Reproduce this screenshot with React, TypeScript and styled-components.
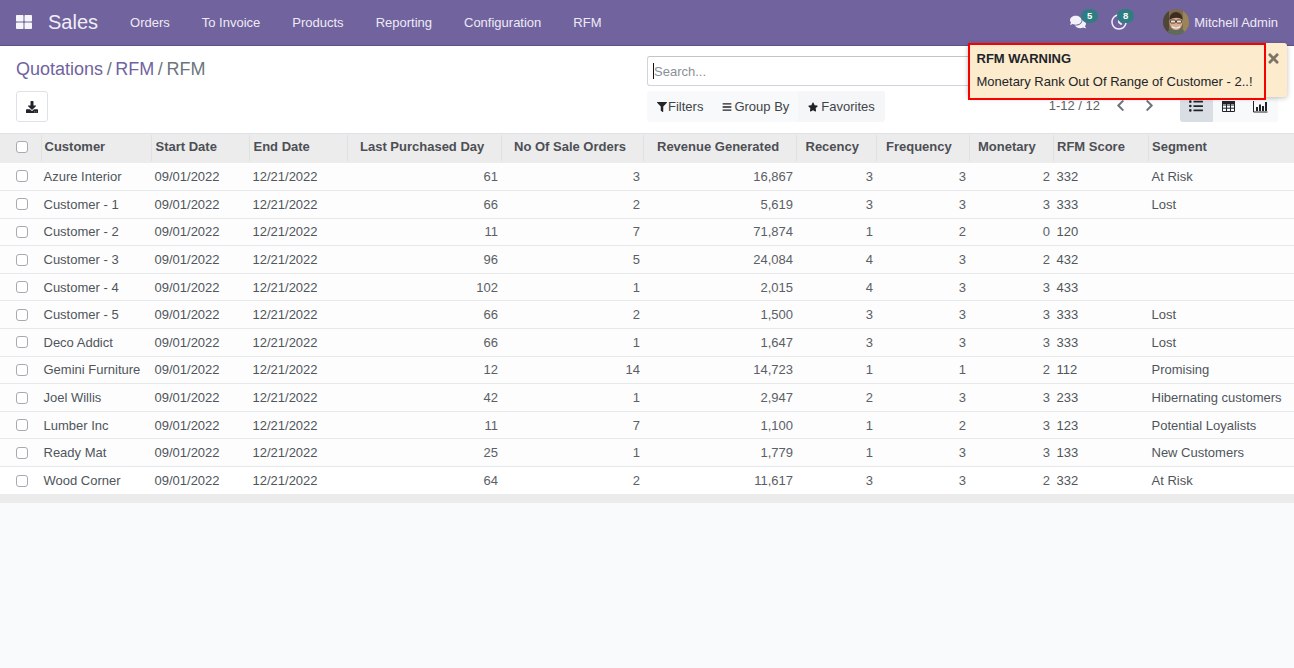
import { createGlobalStyle } from 'styled-components';
import styled from 'styled-components';
import {
  FaBars,
  FaChevronLeft,
  FaChevronRight,
  FaComments,
  FaDownload,
  FaFilter,
  FaListUl,
  FaRegClock,
  FaStar,
  FaThLarge,
  FaTimes,
} from 'react-icons/fa';

const GlobalStyle = createGlobalStyle`
  html, body { margin: 0; height: 100%; }
  body {
    font-family: "Liberation Sans", Arial, sans-serif;
    font-size: 13px;
    color: #4c4c4c;
    background: #f9fafb;
  }
  #root { height: 100%; }
  * { box-sizing: border-box; }
`;

const Page = styled.div`
  position: relative;
  height: 668px;
  overflow: hidden;
  display: flex;
  flex-direction: column;
`;

const Navbar = styled.header`
  height: 46px;
  flex: none;
  display: flex;
  align-items: center;
  background: #71639e;
  border-bottom: 1px solid #5d5283;
  color: #fff;
  padding: 0 16px 1px;
`;

const AppsIcon = styled.span`
  display: flex;
  font-size: 16px;
  width: 16px;
  margin-right: 16px;
  color: #f5f5f8;
`;

const Brand = styled.span`
  font-size: 20px;
  line-height: 24px;
  color: #f0eef5;
  margin-right: 16px;
`;

const Menu = styled.nav`
  display: flex;
  flex: 1;
`;

const MenuItem = styled.a`
  padding: 0 16px;
  color: #eeeaf5;
  font-size: 13px;
`;

const Systray = styled.div`
  display: flex;
  align-items: center;
  color: #f3f1f8;
`;

const TrayIcon = styled.span<{ $gap: number }>`
  position: relative;
  display: flex;
  font-size: 16px;
  margin-right: ${(p) => p.$gap}px;
`;

const Badge = styled.span<{ $left: number }>`
  position: absolute;
  top: -5px;
  left: ${(p) => p.$left}px;
  width: 17px;
  height: 14px;
  border-radius: 7px;
  background: #2f7d82;
  color: #fff;
  font-size: 9.5px;
  font-weight: 700;
  line-height: 13px;
  text-align: center;
`;

const Avatar = styled.svg`
  width: 26px;
  height: 26px;
  border-radius: 50%;
  margin-right: 5px;
`;

const UserName = styled.span`
  font-size: 13px;
  color: #eeeaf5;
`;

const ControlPanel = styled.section`
  height: 87px;
  flex: none;
  display: grid;
  grid-template-columns: 647px 1fr;
  background: #fff;
  padding-right: 16px;
`;

const PanelLeft = styled.div`
  display: flex;
  flex-direction: column;
  align-items: flex-start;
  padding: 12px 0 0 16px;
`;

const Breadcrumb = styled.div`
  font-size: 18px;
  line-height: 22px;
  display: flex;
  gap: 3.6px;
  color: #6c757d;
`;

const Crumb = styled.a`
  color: #71639e;
`;

const DownloadButton = styled.button`
  margin-top: 11px;
  width: 32px;
  height: 31px;
  display: flex;
  align-items: center;
  justify-content: center;
  padding: 0;
  font-size: 12px;
  color: #212529;
  background: #fff;
  border: 1px solid #dee2e6;
  border-radius: 3px;
`;

const PanelRight = styled.div`
  display: flex;
  flex-direction: column;
  padding-top: 10px;
`;

const SearchBox = styled.div`
  height: 30px;
  display: flex;
  align-items: center;
  padding-left: 5px;
  border: 1px solid #ced4da;
  border-top-color: #c4c4c4;
  border-radius: 3px;
  color: #8a9097;
  font-size: 13px;
  background: #fff;
`;

const Caret = styled.span`
  width: 1px;
  height: 16px;
  background: #111;
`;

const PanelRow = styled.div`
  margin-top: 5px;
  display: flex;
  align-items: flex-start;
`;

const FilterGroup = styled.div`
  width: 238px;
  height: 31px;
  display: flex;
  background: #f8f9fa;
  border-radius: 3px;
  overflow: hidden;
`;

const FilterButton = styled.span<{ $pad: string; $gap: number; $dark?: boolean }>`
  display: flex;
  flex: ${(p) => (p.$dark ? 1 : 'none')};
  align-items: center;
  gap: ${(p) => p.$gap}px;
  padding: ${(p) => p.$pad};
  color: #3f4449;
  font-size: 13px;
  background: ${(p) => (p.$dark ? '#f5f6f7' : 'transparent')};
  svg { font-size: 10px; color: #212529; }
`;

const Pager = styled.div`
  margin-left: auto;
  display: flex;
  align-items: center;
  height: 28px;
  color: #5a6168;
  font-size: 13px;
`;

const PagerArrow = styled.span<{ $left: number }>`
  display: flex;
  margin-left: ${(p) => p.$left}px;
  font-size: 13px;
  color: #6c757d;
`;

const ViewSwitch = styled.div`
  margin-left: 24px;
  width: 98px;
  height: 31px;
  display: flex;
  background: #f8f9fa;
  border-radius: 3px;
  overflow: hidden;
`;

const ViewButton = styled.span<{ $active?: boolean }>`
  flex: 1;
  display: flex;
  align-items: center;
  justify-content: center;
  padding-bottom: 1px;
  font-size: 14px;
  color: #212529;
  background: ${(p) => (p.$active ? '#d9dee4' : 'transparent')};
`;

const ViewGlyph = styled.svg`
  width: 15px;
  height: 13px;
  margin-right: 2px;
`;

const ListTable = styled.table`
  width: 1294px;
  flex: none;
  table-layout: fixed;
  border-collapse: collapse;
  background: #fff;
  border-top: 1px solid #dee2e6;
`;

const Col = styled.col<{ $w: number }>`
  width: ${(p) => p.$w}px;
`;

const HeadRow = styled.tr`
  height: 29.4px;
  background: #ececec;
`;

const Th = styled.th<{ $pad: number }>`
  padding: 0 0 3px ${(p) => p.$pad}px;
  font-size: 13px;
  font-weight: 700;
  color: #4c4f54;
  white-space: nowrap;
  overflow: hidden;
  text-align: left;
  position: relative;
  &:not(:first-child)::before {
    content: '';
    position: absolute;
    left: 0;
    top: 1px;
    bottom: 2px;
    width: 1px;
    background: #dfe1e2;
  }
`;

const Row = styled.tr`
  height: 27.62px;
  border-bottom: 1px solid #e6e8ea;
  background: #fdfdfd;
  &:last-child { border-bottom: none; background: #fff; }
`;

const Td = styled.td<{ $right?: boolean; $num?: boolean; $name?: boolean }>`
  padding: 0 3px 0 ${(p) => (p.$name ? 2.5 : 3.5)}px;
  font-size: 13px;
  color: ${(p) => (p.$num ? '#5a6066' : '#4f555b')};
  white-space: nowrap;
  overflow: hidden;
  text-align: ${(p) => (p.$right ? 'right' : 'left')};
`;

const CheckTd = styled.td`
  padding: 0;
`;

const CheckCell = styled.span`
  display: block;
  width: 12px;
  height: 12px;
  margin-left: 16px;
  background: #fff;
  border: 1px solid #a5abb1;
  border-radius: 3px;
`;

const FootBar = styled.div`
  height: 9px;
  flex: none;
  background: #ebebeb;
`;

const Toast = styled.aside`
  position: absolute;
  top: 43px;
  left: 968px;
  width: 319px;
  height: 54px;
  background: #fcebcd;
  border-radius: 3px;
  box-shadow: 0 1px 5px rgba(0, 0, 0, 0.25);
  color: #212529;
`;

const ToastBody = styled.div`
  width: 298px;
  height: 57px;
  padding: 6px 6.5px;
  background: #fcebcd;
  border: 2.5px solid #f60000;
`;

const ToastTitle = styled.div`
  font-weight: 700;
  font-size: 13px;
  line-height: 15px;
  margin-bottom: 8px;
`;

const ToastText = styled.div`
  font-size: 13px;
  line-height: 15px;
  white-space: nowrap;
`;

const ToastClose = styled.span`
  position: absolute;
  top: 8px;
  right: 6px;
  display: flex;
  font-size: 15px;
  color: #7c7567;
`;

const menuItems = ['Orders', 'To Invoice', 'Products', 'Reporting', 'Configuration', 'RFM'];

const columns: { title: string; width: number; pad: number }[] = [
  { title: 'Customer', width: 110, pad: 3.5 },
  { title: 'Start Date', width: 98, pad: 4.5 },
  { title: 'End Date', width: 98, pad: 4.5 },
  { title: 'Last Purchased Day', width: 154, pad: 13 },
  { title: 'No Of Sale Orders', width: 142, pad: 13 },
  { title: 'Revenue Generated', width: 153, pad: 14 },
  { title: 'Recency', width: 80, pad: 9.5 },
  { title: 'Frequency', width: 93, pad: 10 },
  { title: 'Monetary', width: 84, pad: 9 },
  { title: 'RFM Score', width: 95, pad: 4 },
  { title: 'Segment', width: 146, pad: 4 },
];

const rows = [
  ['Azure Interior', '61', '3', '16,867', '3', '3', '2', '332', 'At Risk'],
  ['Customer - 1', '66', '2', '5,619', '3', '3', '3', '333', 'Lost'],
  ['Customer - 2', '11', '7', '71,874', '1', '2', '0', '120', ''],
  ['Customer - 3', '96', '5', '24,084', '4', '3', '2', '432', ''],
  ['Customer - 4', '102', '1', '2,015', '4', '3', '3', '433', ''],
  ['Customer - 5', '66', '2', '1,500', '3', '3', '3', '333', 'Lost'],
  ['Deco Addict', '66', '1', '1,647', '3', '3', '3', '333', 'Lost'],
  ['Gemini Furniture', '12', '14', '14,723', '1', '1', '2', '112', 'Promising'],
  ['Joel Willis', '42', '1', '2,947', '2', '3', '3', '233', 'Hibernating customers'],
  ['Lumber Inc', '11', '7', '1,100', '1', '2', '3', '123', 'Potential Loyalists'],
  ['Ready Mat', '25', '1', '1,779', '1', '3', '3', '133', 'New Customers'],
  ['Wood Corner', '64', '2', '11,617', '3', '3', '2', '332', 'At Risk'],
];

export default function App() {
  return (
    <Page>
      <GlobalStyle />
      <Navbar>
        <AppsIcon>
          <FaThLarge />
        </AppsIcon>
        <Brand>Sales</Brand>
        <Menu>
          {menuItems.map((item) => (
            <MenuItem key={item}>{item}</MenuItem>
          ))}
        </Menu>
        <Systray>
          <TrayIcon $gap={25}>
            <FaComments />
            <Badge $left={11}>5</Badge>
          </TrayIcon>
          <TrayIcon $gap={36}>
            <FaRegClock />
            <Badge $left={6}>8</Badge>
          </TrayIcon>
          <Avatar viewBox="0 0 26 26">
            <rect width="26" height="26" fill="#7d6a4c" />
            <rect x="0" y="0" width="6" height="26" fill="#4f4638" />
            <rect x="20" y="0" width="6" height="26" fill="#9a8458" />
            <path d="M3 26c1-5 5-7 10-7s9 2 10 7z" fill="#5d6a5c" />
            <ellipse cx="13" cy="13" rx="6.5" ry="8" fill="#d9ab90" />
            <path d="M6.5 11c-.5-5 3-8 6.5-8s7 3 6.5 8c-3-3-9-3-13 0z" fill="#3d2c22" />
            <rect x="7.5" y="11" width="5" height="3" rx="1" fill="#efe0d2" stroke="#2b2320" strokeWidth="0.8" />
            <rect x="13.5" y="11" width="5" height="3" rx="1" fill="#efe0d2" stroke="#2b2320" strokeWidth="0.8" />
            <path d="M9 17.5c2 2 6 2 8 0" stroke="#f4ece6" strokeWidth="1.2" fill="none" />
          </Avatar>
          <UserName>Mitchell Admin</UserName>
        </Systray>
      </Navbar>

      <ControlPanel>
        <PanelLeft>
          <Breadcrumb>
            <Crumb>Quotations</Crumb>
            <span>/</span>
            <Crumb>RFM</Crumb>
            <span>/</span>
            <span>RFM</span>
          </Breadcrumb>
          <DownloadButton aria-label="Download">
            <FaDownload />
          </DownloadButton>
        </PanelLeft>
        <PanelRight>
          <SearchBox>
            <Caret />
            Search...
          </SearchBox>
          <PanelRow>
            <FilterGroup>
              <FilterButton $pad="0 9px 0 10px" $gap={1}>
                <FaFilter />
                Filters
              </FilterButton>
              <FilterButton $pad="0 9px 0 10px" $gap={2}>
                <FaBars />
                Group By
              </FilterButton>
              <FilterButton $pad="0 0 0 10px" $gap={3} $dark>
                <FaStar />
                Favorites
              </FilterButton>
            </FilterGroup>
            <Pager>
              1-12 / 12
              <PagerArrow $left={14}>
                <FaChevronLeft />
              </PagerArrow>
              <PagerArrow $left={16}>
                <FaChevronRight />
              </PagerArrow>
            </Pager>
            <ViewSwitch>
              <ViewButton $active>
                <FaListUl />
              </ViewButton>
              <ViewButton>
                <ViewGlyph viewBox="0 0 15 13">
                  <path
                    d="M1.5 1.5h12v10h-12zM1.5 5h12M1.5 8.2h12M5.5 3.5v8M9.5 3.5v8"
                    fill="none"
                    stroke="#212529"
                    strokeWidth="1"
                  />
                  <rect x="1" y="1" width="13" height="3" fill="#212529" />
                </ViewGlyph>
              </ViewButton>
              <ViewButton>
                <ViewGlyph viewBox="0 0 15 13">
                  <path d="M0.5 1v11h14" fill="none" stroke="#212529" strokeWidth="1" />
                  <path d="M3 7h2v4H3zM6 4.5h2V11H6zM9 6h2v5H9zM12 2h2v9h-2z" fill="#212529" />
                </ViewGlyph>
              </ViewButton>
            </ViewSwitch>
          </PanelRow>
        </PanelRight>
      </ControlPanel>

      <ListTable>
        <colgroup>
          <Col $w={41} />
          {columns.map((c) => (
            <Col key={c.title} $w={c.width} />
          ))}
        </colgroup>
        <thead>
          <HeadRow>
            <Th $pad={0}>
              <CheckCell />
            </Th>
            {columns.map((c) => (
              <Th key={c.title} $pad={c.pad}>
                {c.title}
              </Th>
            ))}
          </HeadRow>
        </thead>
        <tbody>
          {rows.map((r) => (
            <Row key={r[0]}>
              <CheckTd>
                <CheckCell />
              </CheckTd>
              <Td $name>{r[0]}</Td>
              <Td>09/01/2022</Td>
              <Td>12/21/2022</Td>
              {r.slice(1, 7).map((v, i) => (
                <Td key={i} $right $num>
                  {v}
                </Td>
              ))}
              <Td>{r[7]}</Td>
              <Td>{r[8]}</Td>
            </Row>
          ))}
        </tbody>
      </ListTable>
      <FootBar />

      <Toast>
        <ToastBody>
          <ToastTitle>RFM WARNING</ToastTitle>
          <ToastText>Monetary Rank Out Of Range of Customer - 2..!</ToastText>
        </ToastBody>
        <ToastClose>
          <FaTimes />
        </ToastClose>
      </Toast>
    </Page>
  );
}
